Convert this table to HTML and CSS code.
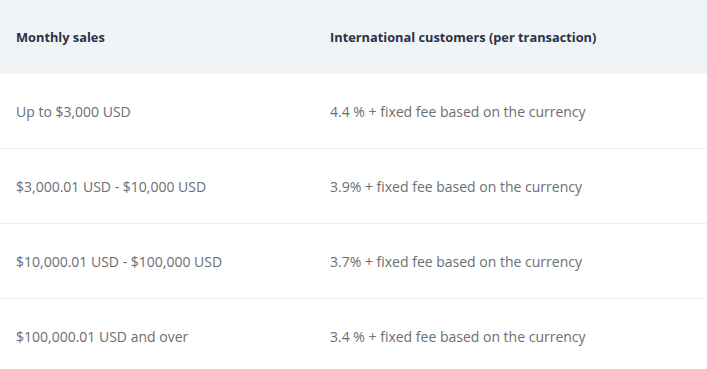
FILE: index.html
```html
<!DOCTYPE html>
<html>
<head>
<meta charset="utf-8">
<link rel="stylesheet" href="styles.css">
</head>
<body>
<table class="fees">
  <thead>
    <tr><th class="c1">Monthly sales</th><th>International customers (per transaction)</th></tr>
  </thead>
  <tbody>
    <tr><td class="c1">Up to $3,000 USD</td><td>4.4 % + fixed fee based on the currency</td></tr>
    <tr><td class="c1">$3,000.01 USD - $10,000 USD</td><td>3.9% + fixed fee based on the currency</td></tr>
    <tr><td class="c1">$10,000.01 USD - $100,000 USD</td><td>3.7% + fixed fee based on the currency</td></tr>
    <tr><td class="c1">$100,000.01 USD and over</td><td>3.4 % + fixed fee based on the currency</td></tr>
  </tbody>
</table>
</body>
</html>
```
FILE: styles.css
```css
html, body { margin: 0; padding: 0; background: #fff; }
body { font-family: "Open Sans", "Liberation Sans", sans-serif; }
.fees { width: 100%; border-collapse: collapse; table-layout: fixed; }
.fees th { background: #f1f4f7; color: #2b3147; font-weight: 700; font-size: 12.8px; text-align: left; height: 74px; padding: 0 16px; }
.fees td { color: #6b6e72; font-size: 14px; height: 74px; padding: 0 16px; border-top: 1px solid #eeeeee; }
.fees tbody tr:first-child td { border-top: none; }
.fees .c1 { width: 282px; }
```
